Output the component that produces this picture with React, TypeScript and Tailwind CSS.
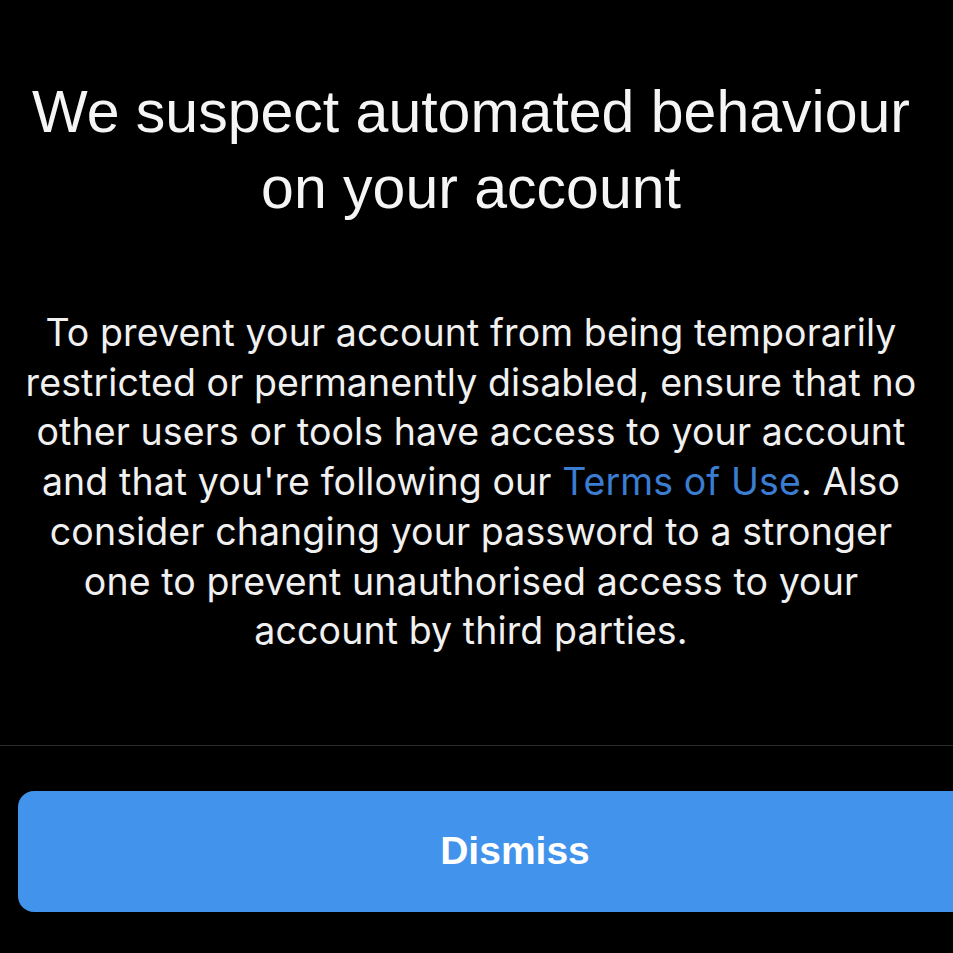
export default function App() {
  return (
    <div className="w-[953px] h-[953px] bg-black overflow-hidden flex flex-col" style={{ fontFamily: '"Liberation Sans", Arial, sans-serif' }}>
      <div className="w-[942px] flex flex-col items-center text-center">
        <h1 className="mt-[74px] text-[59px] leading-[76px] text-[#f5f5f5] font-normal whitespace-nowrap">
          We suspect automated behaviour
          <br />
          on your account
        </h1>
        <p className="mt-[82px] text-[37.5px] leading-[49.7px] tracking-[0.1px] text-[#f0f0f0] whitespace-nowrap" style={{ fontFamily: 'Inter, "Liberation Sans", sans-serif' }}>
          To prevent your account from being temporarily
          <br />
          restricted or permanently disabled, ensure that no
          <br />
          other users or tools have access to your account
          <br />
          and that you're following our <span className="text-[#3b7dd0]">Terms of Use</span>. Also
          <br />
          consider changing your password to a stronger
          <br />
          one to prevent unauthorised access to your
          <br />
          account by third parties.
        </p>
      </div>
      <div className="mt-[89px] h-px w-full bg-[#2a2a2a]" />
      <div className="mt-[45px] pl-[18px] w-[1030px] shrink-0">
        <button className="w-[994px] h-[121px] rounded-[16px] bg-[#4293eb] text-white text-[39px] font-bold">
          Dismiss
        </button>
      </div>
    </div>
  );
}
